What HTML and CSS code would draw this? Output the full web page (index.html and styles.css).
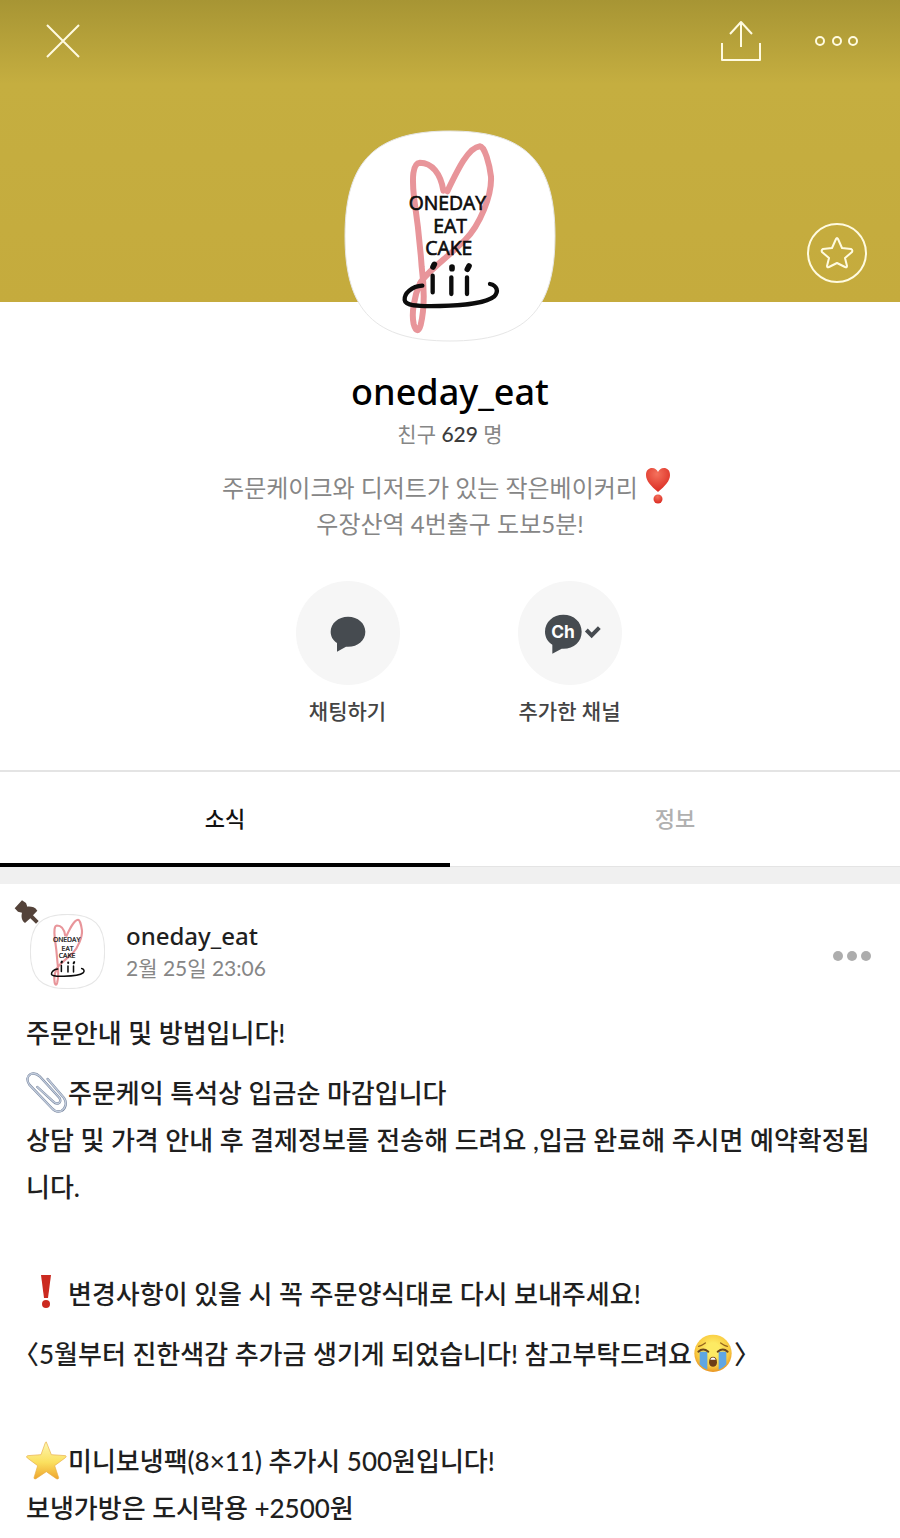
FILE: index.html
```html
<!DOCTYPE html>
<html lang="ko">
<head>
  <meta charset="UTF-8">
  <meta name="viewport" content="width=device-width, initial-scale=1">
  <title>oneday_eat</title>
  <link rel="stylesheet" href="styles.css">
</head>
<body>
  <svg class="defs" width="0" height="0" aria-hidden="true">
    <defs>
      <linearGradient id="starFill" x1="0" y1="0" x2="0" y2="1">
        <stop offset="0.1" stop-color="#fdf3a4"/>
        <stop offset="0.55" stop-color="#fbe05f"/>
        <stop offset="1" stop-color="#eea52e"/>
      </linearGradient>
      <radialGradient id="faceFill" cx="0.5" cy="0.4" r="0.6">
        <stop offset="0.3" stop-color="#fdea63"/>
        <stop offset="0.75" stop-color="#f9c93f"/>
        <stop offset="1" stop-color="#e89422"/>
      </radialGradient>
      <radialGradient id="heartFill" cx="0.45" cy="0.25" r="0.7">
        <stop offset="0" stop-color="#f4715c"/>
        <stop offset="1" stop-color="#dc2f25"/>
      </radialGradient>

      <symbol id="logo" viewBox="42 30 636 636">
        <path class="logo-frame" d="M360 33 C585 33 675 123 675 348 C675 573 585 663 360 663 C135 663 45 573 45 348 C45 123 135 33 360 33 Z" fill="#fff" stroke="#e6e6e6"/>
        <path d="M340 212 C332 160 305 128 270 128 C247 130 246 175 252 232 C262 300 270 370 275 440 C284 510 283 570 272 615 C266 637 257 635 251 612 C244 580 252 530 270 490 C290 455 350 415 405 360 C450 315 486 225 483 170 C478 130 464 80 450 79 C415 83 385 145 352 214" fill="none" stroke="#e8959a" stroke-width="18" stroke-linecap="round" stroke-linejoin="round"/>
        <g class="logo-text">
          <text x="236" y="269">ONEDAY</text>
          <text x="310" y="340">EAT</text>
          <text x="286" y="404">CAKE</text>
        </g>
        <g fill="none" stroke="#0c0c0c" stroke-linecap="round">
          <path d="M308 467 L308 517 M364 472 L364 522 M411 472 L411 522" stroke-width="13"/>
          <path d="M309 441 L313 433 M366 446 L366 441 M412 448 L417 438" stroke-width="17"/>
          <path d="M277 497 C245 499 222 520 224 540 C226 557 260 560 330 558 C400 557 470 548 492 530 C508 514 500 496 480 492" stroke-width="13"/>
        </g>
      </symbol>
    </defs>
  </svg>

  <header class="cover">
    <div class="top-bar">
      <button class="icon-btn" aria-label="닫기">
        <svg width="36" height="36" viewBox="0 0 36 36"><path d="M2 2 L34 34 M34 2 L2 34"/></svg>
      </button>
      <div class="top-actions">
        <button class="icon-btn" aria-label="공유">
          <svg width="42" height="42" viewBox="0 0 42 42"><path d="M2 23 V40 H40 V23 M21 27 V2 M10 14 L21 2 L32 14"/></svg>
        </button>
        <button class="icon-btn" aria-label="더보기">
          <svg width="46" height="14" viewBox="0 0 46 14"><circle cx="6" cy="7" r="4"/><circle cx="23" cy="7" r="4"/><circle cx="39" cy="7" r="4"/></svg>
        </button>
      </div>
    </div>
    <button class="icon-btn favorite" aria-label="즐겨찾기">
      <svg width="62" height="62" viewBox="0 0 62 62">
        <circle cx="31" cy="31" r="29"/>
        <path d="M30 17 Q31 15 32 17 L36 26 L45 27 Q47 28 46 30 L39 36 L41 44 Q41 46 39 45 L31 41 L23 45 Q21 46 21 44 L23 36 L16 30 Q15 28 17 27 L26 26 Z"/>
      </svg>
    </button>
  </header>

  <section class="profile">
    <svg class="avatar" role="img" aria-label="oneday eat cake"><use href="#logo"/></svg>
    <h1>oneday_eat</h1>
    <p class="friends">친구 <strong>629</strong> 명</p>
    <p class="about">
      주문케이크와 디저트가 있는 작은베이커리<svg class="heart" width="40" height="38" viewBox="0 0 40 38" role="img" aria-label="하트 느낌표"><path d="M20 25 C13 19 8 14 8 8 C8 3 11 1 14 1 C17 1 19 3 20 5 C21 3 23 1 26 1 C29 1 32 3 32 8 C32 14 27 19 20 25 Z" fill="url(#heartFill)"/><circle cx="20" cy="32" r="4.5" fill="url(#heartFill)"/></svg><br>
      우장산역 4번출구 도보5분!
    </p>
    <div class="actions">
      <button class="action">
        <svg width="104" height="104" viewBox="48 32 312 312" aria-hidden="true">
          <circle cx="204" cy="188" r="156" fill="#f6f6f6"/>
          <path d="M204 139 C234 139 256 159 256 184 C256 210 234 229 204 229 L198 229 L171 244 V218 C159 210 152 198 152 184 C152 159 175 139 204 139 Z" fill="#464b50"/>
        </svg>
        채팅하기
      </button>
      <button class="action">
        <svg width="104" height="104" viewBox="713 32 312 312" aria-hidden="true">
          <circle cx="869" cy="188" r="156" fill="#f6f6f6"/>
          <path d="M849 133 C881 133 904 155 904 184 C904 214 881 235 849 235 L844 235 L816 250 V223 C802 214 794 200 794 184 C794 155 818 133 849 133 Z" fill="#464b50"/>
          <text class="ch-text" x="848" y="203">Ch</text>
          <path d="M918 179 L934 195 L957 172" fill="none" stroke="#464b50" stroke-width="12"/>
        </svg>
        추가한 채널
      </button>
    </div>
  </section>

  <nav class="tabs" role="tablist">
    <button class="tab active" role="tab" aria-selected="true">소식</button>
    <button class="tab" role="tab" aria-selected="false">정보</button>
  </nav>

  <article class="post">
    <div class="post-head">
      <div class="post-avatar">
        <svg class="thumb" aria-hidden="true"><use href="#logo"/></svg>
        <svg class="pin" width="26" height="26" viewBox="0 0 78 78" role="img" aria-label="고정됨"><path d="M24 1 L36 9 L40 20 C51 19 63 21 70 32 L57 46 L74 63 L66 71 L49 55 L33 69 C23 61 21 50 24 38 L12 35 L2 25 Z" fill="#54433a"/></svg>
      </div>
      <div class="post-meta">
        <h2>oneday_eat</h2>
        <time datetime="02-25T23:06">2월 25일 23:06</time>
      </div>
      <button class="more" aria-label="게시글 메뉴">
        <svg width="38" height="10" viewBox="0 0 38 10"><circle cx="5" cy="5" r="5"/><circle cx="19" cy="5" r="5"/><circle cx="33" cy="5" r="5"/></svg>
      </button>
    </div>

    <div class="post-body">
      <p>주문안내 및 방법입니다!</p>
      <p class="emoji-line">
        <svg width="42" height="42" viewBox="0 0 126 126" role="img" aria-label="클립">
          <g fill="none" stroke-linecap="round" stroke-linejoin="round">
            <path d="M65 21 L114 78 C124 92 119 110 106 117 C95 121 84 116 77 108 L10 38 C1 25 3 12 14 6 C25 2 34 6 41 13 L100 77 C105 86 103 91 97 94 C91 96 86 93 81 88 L34 45" stroke="#74829b" stroke-width="7"/>
            <path d="M65 21 L114 78 C124 92 119 110 106 117 C95 121 84 116 77 108 L10 38 C1 25 3 12 14 6 C25 2 34 6 41 13 L100 77 C105 86 103 91 97 94 C91 96 86 93 81 88 L34 45" stroke="#c3cddd" stroke-width="4"/>
          </g>
        </svg>
        <span>주문케익 특석상 입금순 마감입니다</span>
      </p>
      <p>상담 및 가격 안내 후 결제정보를 전송해 드려요 ,입금 완료해 주시면 예약확정됩니다.</p>
      <p><br></p>
      <p class="emoji-line">
        <svg width="42" height="42" viewBox="0 0 42 42" role="img" aria-label="느낌표">
          <path d="M15 2 H25 L22 25 H18 Z" fill="#cb2a20"/><circle cx="20" cy="31" r="4" fill="#cb2a20"/>
        </svg>
        <span>변경사항이 있을 시 꼭 주문양식대로 다시 보내주세요!</span>
      </p>
      <p class="emoji-line">
        <span><span class="bracket">〈</span>5월부터 진한색감 추가금 생기게 되었습니다! 참고부탁드려요</span>
        <svg width="42" height="42" viewBox="0 0 126 126" role="img" aria-label="우는 얼굴">
          <circle cx="63" cy="61" r="56" fill="url(#faceFill)"/>
          <path d="M23 56 H46 V110 C35 106 28 100 23 94 Z M80 56 H103 V94 C98 100 91 106 80 110 Z" fill="#5fa6e4"/>
          <path d="M19 56 Q33 43 49 56 M77 56 Q93 43 107 56" fill="none" stroke="#6b461c" stroke-width="6" stroke-linecap="round"/>
          <path d="M20 40 Q31 37 40 30 M86 30 Q95 37 106 40" fill="none" stroke="#95651d" stroke-width="4" stroke-linecap="round"/>
          <path d="M51 88 C51 66 75 66 75 88 C75 106 51 106 51 88 Z" fill="#6d3d17"/>
          <path d="M55 80 C57 71 69 71 71 80 Z" fill="#fff"/>
        </svg>
        <span class="bracket">〉</span>
      </p>
      <p><br></p>
      <p class="emoji-line">
        <svg width="42" height="42" viewBox="0 0 126 126" role="img" aria-label="별">
          <path d="M61 6 L76 44 L119 47 C122 49 120 52 117 54 L86 77 L98 113 C98 117 95 118 91 116 L61 95 L30 116 C26 118 24 116 24 113 L35 77 L4 54 C1 51 1 48 5 47 L45 44 L58 8 Q60 4 61 6 Z" fill="url(#starFill)" stroke="#e9ae45" stroke-width="2"/>
        </svg>
        <span>미니보냉팩(8×11) 추가시 500원입니다!</span>
      </p>
      <p>보냉가방은 도시락용 +2500원</p>
    </div>
  </article>
</body>
</html>
```
FILE: styles.css
```css
:root {
  --gold: #c5ab3d;
  --gold-dark: #a79534;
  --text: #1f1f1f;
  --muted: #868686;
  --line: #e4e4e4;
}

* {
  box-sizing: border-box;
}

body {
  font-family: Lato, "Noto Sans CJK KR", sans-serif;
  background: #fff;
  color: var(--text);
  margin: 0;
  min-height: 100vh;
}

h1, h2, p {
  margin: 0;
}

button {
  font-family: inherit;
  background: none;
  border: none;
  padding: 0;
  cursor: pointer;
}

svg {
  display: block;
  flex-shrink: 0;
}

.defs {
  position: absolute;
}

/* cover */
.cover {
  display: flex;
  flex-direction: column;
  justify-content: space-between;
  height: 302px;
  padding: 20px 32px 18px 45px;
  background: linear-gradient(var(--gold-dark), #c5ae40 84px, var(--gold));
}

.top-bar,
.top-actions {
  display: flex;
  align-items: center;
}

.top-bar {
  justify-content: space-between;
  padding-right: 8px;
}

.top-actions {
  gap: 52px;
}

.icon-btn svg {
  fill: none;
  stroke: #fffbe0;
  stroke-width: 2;
  stroke-linejoin: round;
}

.favorite {
  align-self: flex-end;
}

/* profile */
.profile {
  display: flex;
  flex-direction: column;
  align-items: center;
  padding-bottom: 42px;
  text-align: center;
}

.avatar {
  width: 212px;
  height: 212px;
  margin-top: -172px;
  stroke-width: 3;
}

.logo-text {
  font-family: "Open Sans", sans-serif;
  font-size: 58px;
  fill: #0c0c0c;
  stroke: #0c0c0c;
  stroke-width: 2;
}

h1 {
  margin-top: 25px;
  font-family: "Noto Sans", sans-serif;
  font-size: 36px;
  font-weight: 500;
  line-height: 50px;
  color: #000;
}

.friends {
  font-size: 21px;
  line-height: 34px;
  color: var(--muted);
}

.friends strong {
  font-weight: 500;
  color: #3c3c3c;
}

.about {
  margin-top: 19px;
  font-size: 24px;
  line-height: 36px;
  color: var(--muted);
}

.heart {
  display: inline-block;
  margin: -10px 0;
  vertical-align: 2px;
}

.actions {
  display: flex;
  gap: 118px;
  margin-top: 39px;
  padding-left: 17px;
}

.action {
  display: flex;
  flex-direction: column;
  align-items: center;
  gap: 9px;
  width: 104px;
  font-size: 21px;
  font-weight: 500;
  line-height: 34px;
  color: #444;
  white-space: nowrap;
}

.ch-text {
  font-family: Inter, sans-serif;
  font-size: 52px;
  font-weight: 700;
  fill: #fff;
  text-anchor: middle;
}

/* tabs */
.tabs {
  display: grid;
  grid-template-columns: 1fr 1fr;
  border-top: 2px solid var(--line);
  border-bottom: 17px solid #f0f0f0;
}

.tab {
  height: 95px;
  padding-bottom: 5px;
  border-bottom: 1px solid var(--line);
  font-size: 22px;
  font-weight: 500;
  color: #b0b0b0;
}

.tab.active {
  padding-bottom: 2px;
  border-bottom: 4px solid #000;
  color: #111;
}

/* post */
.post {
  padding: 30px 24px 6px 26px;
}

.post-head {
  display: flex;
  align-items: center;
  padding: 0 5px 0 4px;
}

.post-avatar {
  position: relative;
}

.thumb {
  width: 75px;
  height: 75px;
  stroke-width: 9;
}

.pin {
  position: absolute;
  top: -14px;
  left: -16px;
}

.post-meta {
  flex: 1;
  margin-left: 21px;
}

h2 {
  font-family: "Noto Sans", sans-serif;
  font-size: 24px;
  font-weight: 500;
  line-height: 32px;
}

time {
  display: block;
  font-size: 21px;
  line-height: 32px;
  color: var(--muted);
}

.more {
  padding-top: 8px;
}

.more svg {
  fill: #adadad;
}

.post-body {
  margin-top: 21px;
  font-size: 26px;
  font-weight: 500;
  line-height: 47px;
}

.emoji-line {
  display: flex;
  align-items: center;
  padding-top: 12px;
  line-height: 48px;
}

/* half-width angle brackets */
.bracket {
  font-feature-settings: "halt";
}
```
